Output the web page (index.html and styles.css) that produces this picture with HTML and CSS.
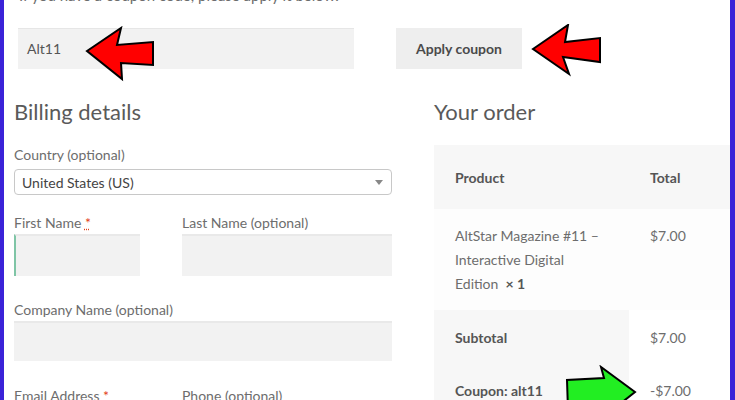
FILE: index.html
```html
<!DOCTYPE html>
<html>
<head>
<meta charset="utf-8">
<link rel="stylesheet" href="styles.css">
</head>
<body>
<div class="frame">
  <div class="page">
    <p class="coupon-note">If you have a coupon code, please apply it below.</p>
    <form class="coupon">
      <div class="coupon-input">Alt11</div>
      <div class="coupon-btn">Apply coupon</div>
    </form>
    <div class="cols">
      <div class="billing">
        <h3 class="title">Billing details</h3>
        <div class="field country">
          <label class="lbl">Country (optional)</label>
          <div class="select"><span>United States (US)</span><span class="caret"></span></div>
        </div>
        <div class="row2">
          <div class="field first">
            <label class="lbl">First Name <abbr class="req">*</abbr></label>
            <div class="input focused"></div>
          </div>
          <div class="field last">
            <label class="lbl">Last Name (optional)</label>
            <div class="input"></div>
          </div>
        </div>
        <div class="field company">
          <label class="lbl">Company Name (optional)</label>
          <div class="input"></div>
        </div>
        <div class="row2">
          <div class="field first">
            <label class="lbl">Email Address <span class="req2">*</span></label>
          </div>
          <div class="field last">
            <label class="lbl">Phone (optional)</label>
          </div>
        </div>
      </div>
      <div class="order">
        <h3 class="title">Your order</h3>
        <table class="otable">
          <thead>
            <tr><th class="c1">Product</th><th class="c2">Total</th></tr>
          </thead>
          <tbody>
            <tr class="prod"><td class="c1">AltStar Magazine #11&nbsp;– Interactive Digital Edition&nbsp; <strong>× 1</strong></td><td class="c2">$7.00</td></tr>
          </tbody>
          <tfoot>
            <tr class="sub"><th class="c1">Subtotal</th><td class="c2">$7.00</td></tr>
            <tr class="sub cpn"><th class="c1">Coupon: alt11</th><td class="c2">-$7.00</td></tr>
          </tfoot>
        </table>
      </div>
    </div>
  </div>
  <svg class="arrow a1" width="80" height="60" viewBox="0 0 80 60"><polygon points="2,25 36,2 32,19 68,16 68,39 36,37 37,53" fill="#ff0000" stroke="#000" stroke-width="2" stroke-linejoin="miter"/></svg>
  <svg class="arrow a2" width="80" height="60" viewBox="0 0 80 60"><polygon points="2,25 37,1 34,18 69,14 69,38 32,33 38,50" fill="#ff0000" stroke="#000" stroke-width="2"/></svg>
  <svg class="arrow a3" width="80" height="60" viewBox="0 0 80 60"><polygon points="70,27 36,2 39,13 2,15 3,45 38,40 36,54" fill="#22ee22" stroke="#000" stroke-width="2"/></svg>
</div>
</body>
</html>
```
FILE: styles.css
```css
html, body {
  margin: 0;
  padding: 0;
  background: #fff;
  overflow: hidden;
}
.frame {
  position: relative;
  width: 735px;
  height: 400px;
  box-sizing: border-box;
  border-left: 4px solid #3a22d8;
  border-right: 5px solid #3a22d8;
  overflow: hidden;
  font-family: Lato, "Open Sans", sans-serif;
  color: #6d6d6d;
}
.page {
  padding-left: 10px;
}
.coupon-note {
  margin: -13px 0 0 5px;
  font-size: 15px;
  line-height: 16px;
  color: #6d6d6d;
}
.coupon {
  display: flex;
  margin: 25px 0 0 4px;
  gap: 42px;
}
.coupon-input {
  width: 336px;
  height: 41px;
  box-sizing: border-box;
  background: #f2f2f2;
  border-top: 1px solid #e6e6e6;
  padding-left: 9px;
  font-size: 14px;
  line-height: 40px;
  color: #555;
}
.coupon-btn {
  width: 126px;
  height: 41px;
  background: #eeeeee;
  text-align: center;
  font-size: 14px;
  font-weight: 700;
  line-height: 41px;
  color: #4a4a4a;
}
.cols {
  display: grid;
  grid-template-columns: 378px 300px;
  column-gap: 42px;
  margin-top: 26px;
}
.title {
  margin: 0;
  font-size: 22px;
  font-weight: 400;
  line-height: 34px;
  color: #5a5a5a;
}
.field {
  display: flex;
  flex-direction: column;
}
.billing .title {
  margin-bottom: 16px;
}
.lbl {
  font-size: 14px;
  line-height: 20px;
  color: #6d6d6d;
  margin-bottom: 1px;
}
.country .lbl {
  margin-bottom: 4px;
}
.select {
  height: 26px;
  box-sizing: border-box;
  border: 1px solid #c8c8c8;
  border-radius: 4px;
  display: flex;
  align-items: center;
  justify-content: space-between;
  padding: 0 8px 0 7px;
  font-size: 14px;
  color: #444;
}
.caret {
  width: 0;
  height: 0;
  border-left: 4px solid transparent;
  border-right: 4px solid transparent;
  border-top: 5px solid #888;
}
.row2 {
  display: flex;
  gap: 42px;
  margin-top: 18px;
}
.company + .row2 {
  margin-top: 25px;
}
.row2 .first { width: 126px; }
.row2 .last { width: 210px; }
.input {
  height: 42px;
  box-sizing: border-box;
  background: #f2f2f2;
  border-top: 2px solid #e9e9e9;
}
.input.focused {
  border-left: 2px solid #7fc5a6;
}
.company {
  margin-top: 24px;
}
.company .input { height: 40px; }
.req {
  color: #e2401c;
  text-decoration: underline dotted;
  border: 0;
}
.req2 { color: #e2401c; }
.order .title {
  margin-bottom: 16px;
}
.otable {
  border-collapse: collapse;
  width: 300px;
  font-size: 14px;
  color: #6d6d6d;
}
.otable th, .otable td {
  text-align: left;
  vertical-align: top;
  padding: 0;
}
.otable .c1 { width: 195px; padding-left: 21px; box-sizing: border-box; }
.otable .c2 { padding-left: 21px; }
.otable thead tr { background: #f7f7f7; }
.otable thead th {
  height: 64px;
  vertical-align: middle;
  font-weight: 700;
  color: #555;
}
.otable .prod td {
  background: #fdfdfd;
  padding-top: 15px;
  padding-bottom: 14px;
  line-height: 24px;
  height: 100px;
  box-sizing: border-box;
}
.otable .prod .c1 { padding-right: 22px; }
.otable .prod strong { color: #555; }
.otable .sub th {
  background: #f7f7f7;
  font-weight: 700;
  color: #555;
}
.otable .sub th, .otable .sub td {
  height: 54px;
  vertical-align: middle;
}
.otable .sub.cpn th, .otable .sub.cpn td {
  height: 52px;
}
.arrow {
  position: absolute;
}
.a1 { left: 81px; top: 26px; }
.a2 { left: 527px; top: 24px; }
.a3 { left: 561px; top: 365px; }
```
